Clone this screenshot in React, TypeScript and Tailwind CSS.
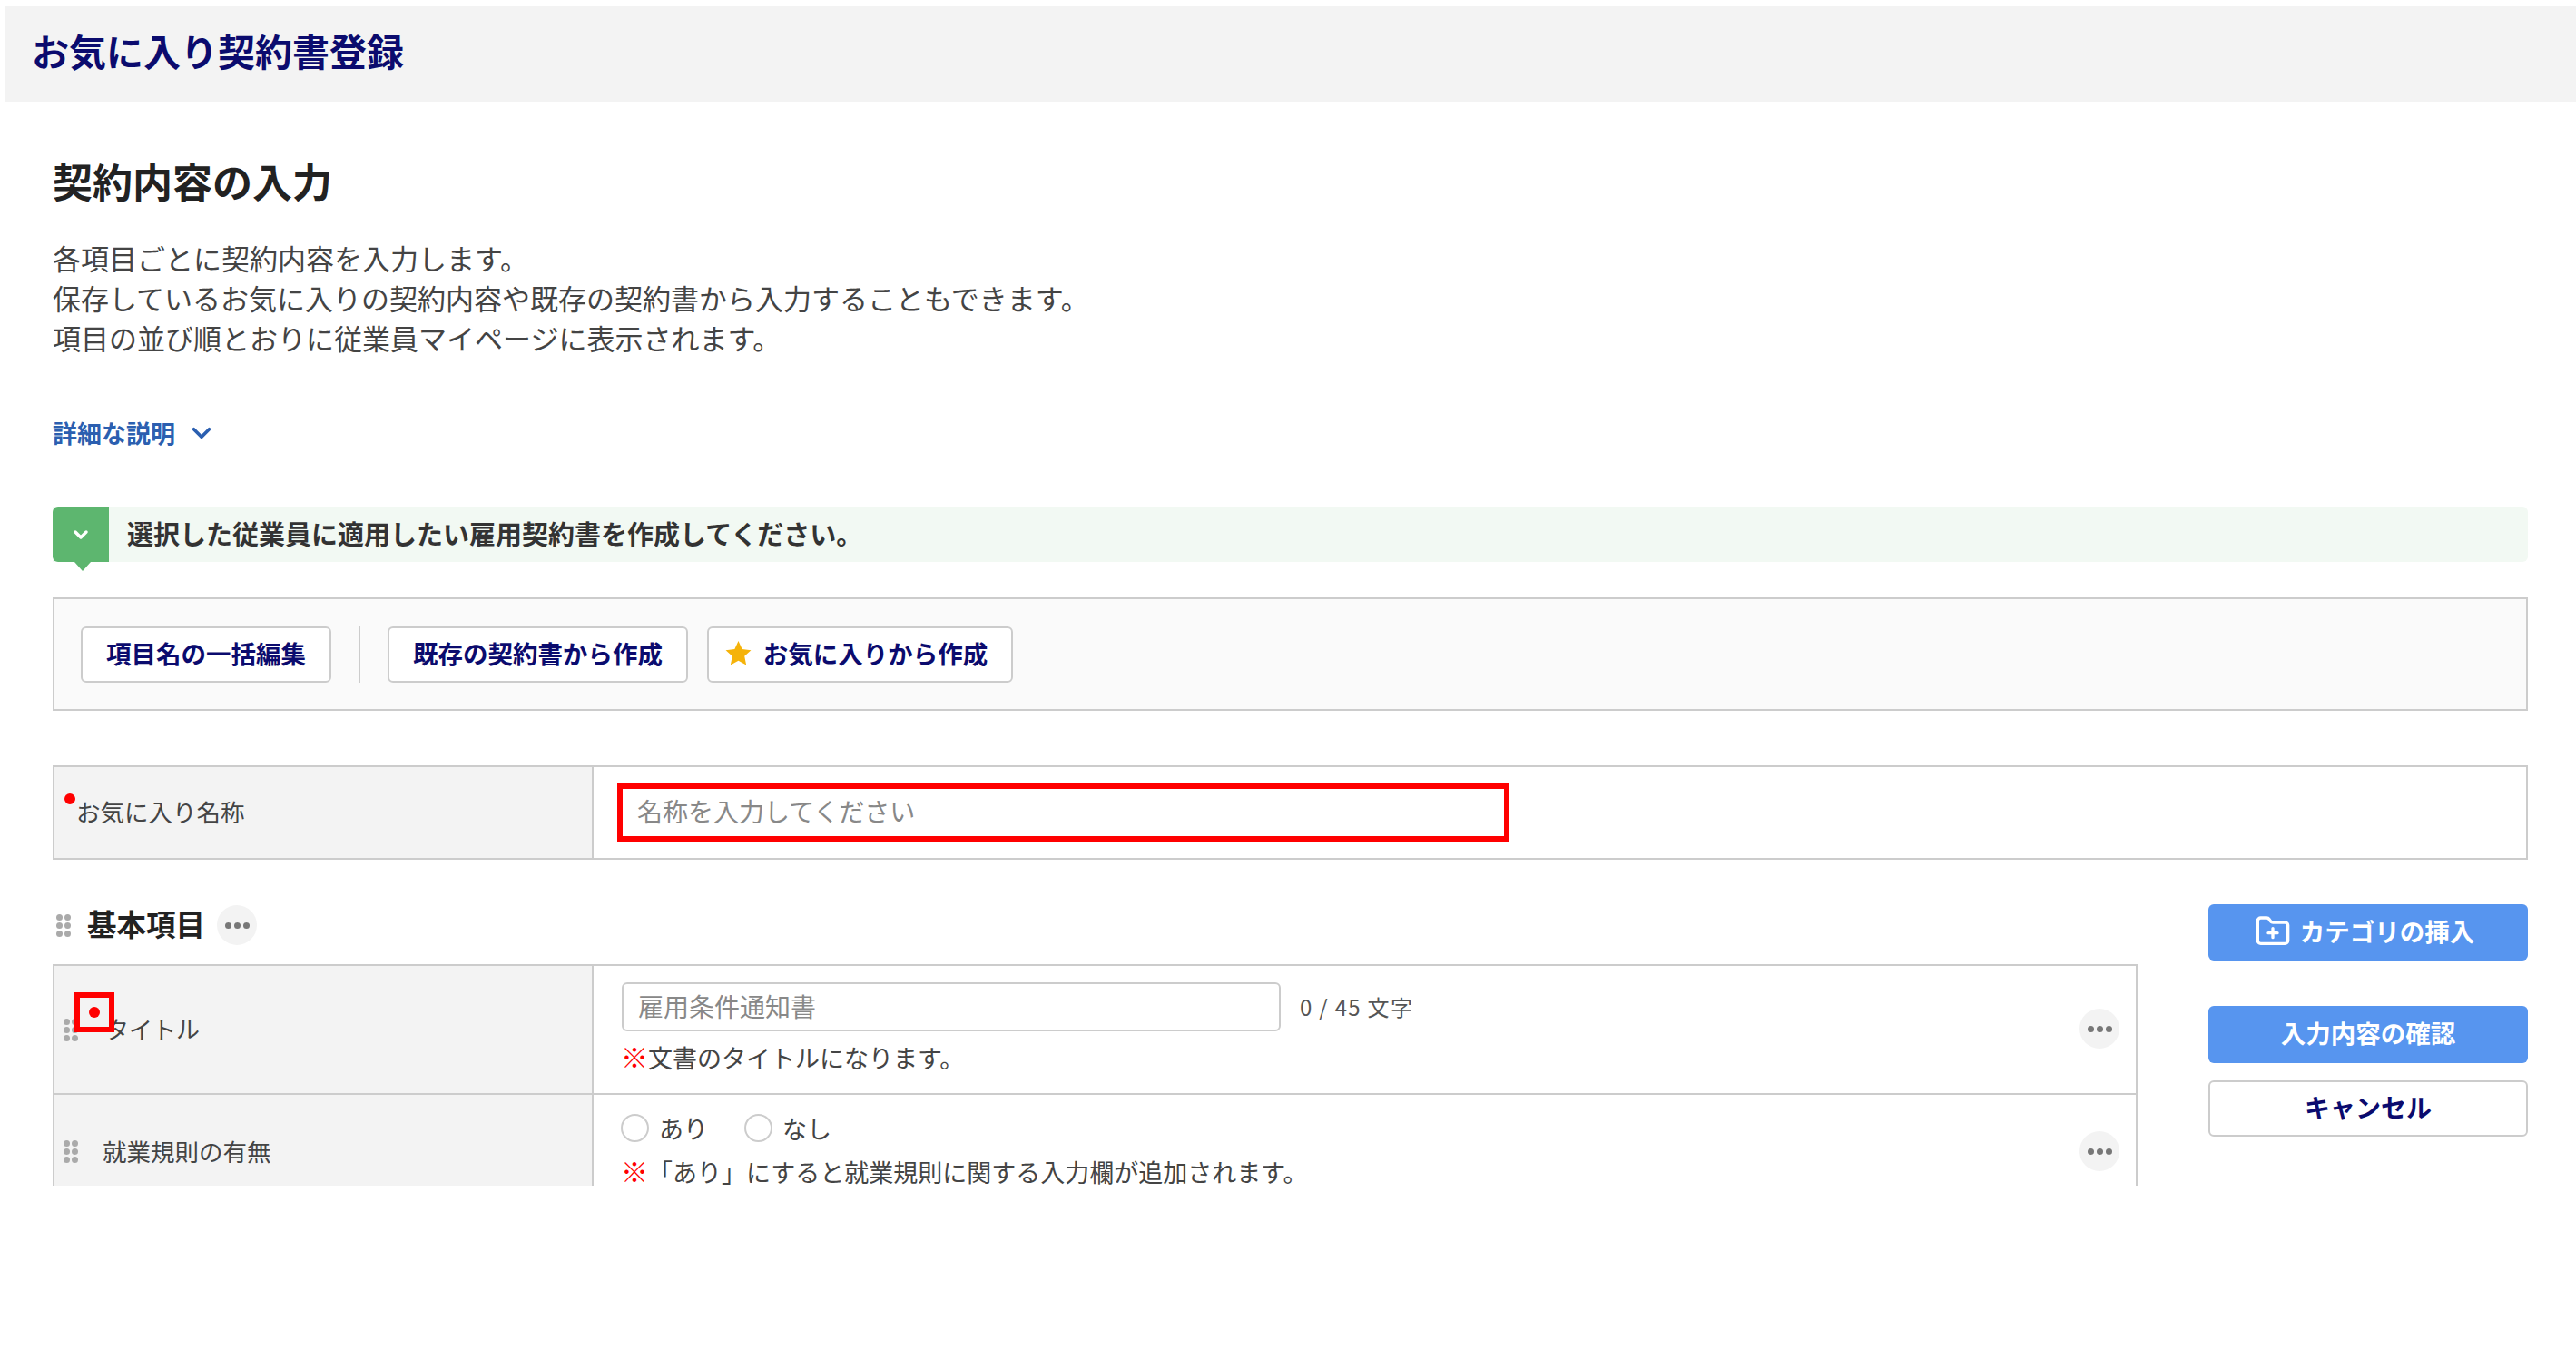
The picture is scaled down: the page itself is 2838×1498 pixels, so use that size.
import React from "react";
import { ChevronDown, FolderPlus } from "lucide-react";

function Dots() {
  return (
    <span className="flex h-[44px] w-[44px] items-center justify-center gap-[3px] rounded-full bg-[#f3f3f3]">
      <span className="h-[7px] w-[7px] rounded-full bg-[#777]" />
      <span className="h-[7px] w-[7px] rounded-full bg-[#777]" />
      <span className="h-[7px] w-[7px] rounded-full bg-[#777]" />
    </span>
  );
}

function Handle() {
  return (
    <span className="grid h-[25px] w-[16px] grid-cols-2 gap-x-[2px] gap-y-[2px]">
      {[0, 1, 2, 3, 4, 5].map((i) => (
        <span key={i} className="h-[7px] w-[7px] rounded-full bg-[#aaa]" />
      ))}
    </span>
  );
}

function Radio({ label }: { label: string }) {
  return (
    <span className="flex items-center gap-[11px]">
      <span className="h-[31px] w-[31px] rounded-full border-2 border-[#ccc] bg-white" />
      <span className="text-[27px] leading-[31px] text-[#444]">{label}</span>
    </span>
  );
}

export default function App() {
  return (
    <div className="h-[1498px] w-[2838px] overflow-hidden bg-white pt-[7px] font-['Noto_Sans_CJK_JP',sans-serif] text-[#444]">
      <header className="ml-[6px] flex h-[105px] items-center bg-[#f3f3f3] pb-[10px] pl-[29px]">
        <h1 className="text-[41px] font-bold leading-[50px] text-[#0b0b6e]">お気に入り契約書登録</h1>
      </header>

      <main className="pl-[58px] pr-[53px]">
        <h2 className="mt-[59px] text-[44px] font-bold leading-[56px] text-[#222]">契約内容の入力</h2>
        <div className="mt-[35px] text-[31px] leading-[44px] text-[#444]">
          <p>各項目ごとに契約内容を入力します。</p>
          <p>保存しているお気に入りの契約内容や既存の契約書から入力することもできます。</p>
          <p>項目の並び順とおりに従業員マイページに表示されます。</p>
        </div>

        <div className="mt-[63px] flex h-[40px] items-center gap-[12px] text-[27px] font-bold text-[#2b5fb0]">
          <span>詳細な説明</span>
          <ChevronDown size={34} strokeWidth={2.5} />
        </div>

        <div className="relative mt-[61px] flex h-[61px] items-center rounded-r-[6px] bg-[#f2f9f3]">
          <div className="relative flex h-[61px] w-[62px] items-center justify-center rounded-l-[6px] bg-[#5db66f] text-white">
            <ChevronDown size={24} strokeWidth={3.5} />
            <span className="absolute left-[24px] top-[61px] h-0 w-0 border-x-[9px] border-t-[10px] border-x-transparent border-t-[#5db66f]" />
          </div>
          <p className="mb-[2px] ml-[20px] text-[29px] font-bold text-[#333]">選択した従業員に適用したい雇用契約書を作成してください。</p>
        </div>

        <div className="mt-[39px] flex h-[125px] items-center border-2 border-[#ccc] bg-[#fafafa] pl-[29px]">
          <button className="h-[62px] w-[276px] rounded-[6px] border-2 border-[#ccc] bg-white pb-[2px] text-[27.5px] font-bold text-[#0b0b6e]">項目名の一括編集</button>
          <span className="mx-[30px] h-[62px] w-[2px] bg-[#ccc]" />
          <button className="h-[62px] w-[331px] rounded-[6px] border-2 border-[#ccc] bg-white pb-[2px] text-[27.5px] font-bold text-[#0b0b6e]">既存の契約書から作成</button>
          <button className="ml-[21px] flex h-[62px] w-[337px] items-center justify-center gap-[12px] rounded-[6px] border-2 border-[#ccc] bg-white pb-[2px] pr-[9px] text-[27.5px] font-bold text-[#0b0b6e]">
            <svg viewBox="0 0 24 24" className="h-[31px] w-[31px]" fill="#f5b30a"><path d="M12 1.5l3.2 7 7.6.9-5.6 5.2 1.5 7.5L12 18.4l-6.7 3.7 1.5-7.5L1.2 9.4l7.6-.9z" /></svg>
            <span>お気に入りから作成</span>
          </button>
        </div>

        <div className="mt-[60px] flex h-[104px] border-2 border-[#ccc]">
          <div className="relative flex w-[594px] items-center border-r-2 border-[#ccc] bg-[#f3f3f3] pb-[2px] pl-[24px]">
            <span className="absolute left-[11px] top-[29px] h-[12px] w-[12px] rounded-full bg-[#f00]" />
            <span className="text-[26.5px] text-[#444]">お気に入り名称</span>
          </div>
          <div className="flex flex-1 items-center pl-[26px]">
            <div className="flex h-[64px] w-[983px] items-center border-[6px] border-[#f00] pb-[5px] pl-[16px] text-[28px] text-[#888]">名称を入力してください</div>
          </div>
        </div>

        <div className="mt-[49px] flex justify-between">
          <div className="w-[2297px]">
            <div className="mt-[2px] flex h-[42px] items-center">
              <span className="ml-[4px]"><Handle /></span>
              <span className="mb-[4px] ml-[18px] text-[32.5px] font-bold text-[#222]">基本項目</span>
              <span className="ml-[13px]"><Dots /></span>
            </div>
            <div className="mt-[22px] h-[244px] overflow-hidden border-x-2 border-t-2 border-[#ccc]">
              <div className="flex h-[142px] border-b-2 border-[#ccc]">
                <div className="relative flex w-[594px] items-center border-r-2 border-[#ccc] bg-[#f3f3f3] pl-[10px]">
                  <Handle />
                  <span className="mb-[3px] ml-[30px] text-[26px] text-[#444]">タイトル</span>
                  <span className="absolute left-[22px] top-[29px] flex h-[44px] w-[44px] items-center justify-center border-[6px] border-[#f00]">
                    <span className="h-[12px] w-[12px] rounded-full bg-[#f00]" />
                  </span>
                </div>
                <div className="relative flex-1 pl-[30px] pt-[18px]">
                  <div className="flex items-center">
                    <div className="ml-[1px] flex h-[54px] w-[726px] items-center rounded-[6px] border-2 border-[#ccc] pb-[2px] pl-[16px] text-[28px] text-[#888]">雇用条件通知書</div>
                    <span className="mb-[1px] ml-[21px] text-[24px] tracking-[1.3px] text-[#555]">0 / 45 文字</span>
                  </div>
                  <p className="mt-[11px] text-[27px] leading-[36px] text-[#444]"><span className="text-[30px] font-bold leading-[30px] text-[#f00]">※</span>文書のタイトルになります。</p>
                  <span className="absolute right-[18px] top-[47px]"><Dots /></span>
                </div>
              </div>
              <div className="flex h-[124px]">
                <div className="flex w-[594px] items-center border-r-2 border-[#ccc] bg-[#f3f3f3] pl-[10px]">
                  <Handle />
                  <span className="ml-[27px] text-[26.5px] text-[#444]">就業規則の有無</span>
                </div>
                <div className="relative flex-1 pl-[30px] pt-[21px]">
                  <div className="flex gap-[40px]">
                    <Radio label="あり" />
                    <Radio label="なし" />
                  </div>
                  <p className="mt-[18px] text-[27px] leading-[27px] text-[#444]"><span className="text-[30px] font-bold leading-[27px] text-[#f00]">※</span>「あり」にすると就業規則に関する入力欄が追加されます。</p>
                  <span className="absolute right-[18px] top-[40px]"><Dots /></span>
                </div>
              </div>
            </div>
          </div>

          <div className="w-[352px]">
            <button className="flex h-[62px] w-full items-center justify-center gap-[10px] rounded-[6px] bg-[#5795ef] pb-[2px] pr-[8px] text-[27.5px] font-bold text-white">
              <FolderPlus size={40} strokeWidth={2} />
              <span>カテゴリの挿入</span>
            </button>
            <button className="mt-[50px] h-[63px] w-full rounded-[6px] bg-[#5795ef] pb-[3px] text-[27.5px] font-bold text-white">入力内容の確認</button>
            <button className="mt-[19px] h-[62px] w-full rounded-[6px] border-2 border-[#ccc] bg-white pb-[4px] text-[28px] font-bold text-[#0b0b6e]">キャンセル</button>
          </div>
        </div>
      </main>
    </div>
  );
}
